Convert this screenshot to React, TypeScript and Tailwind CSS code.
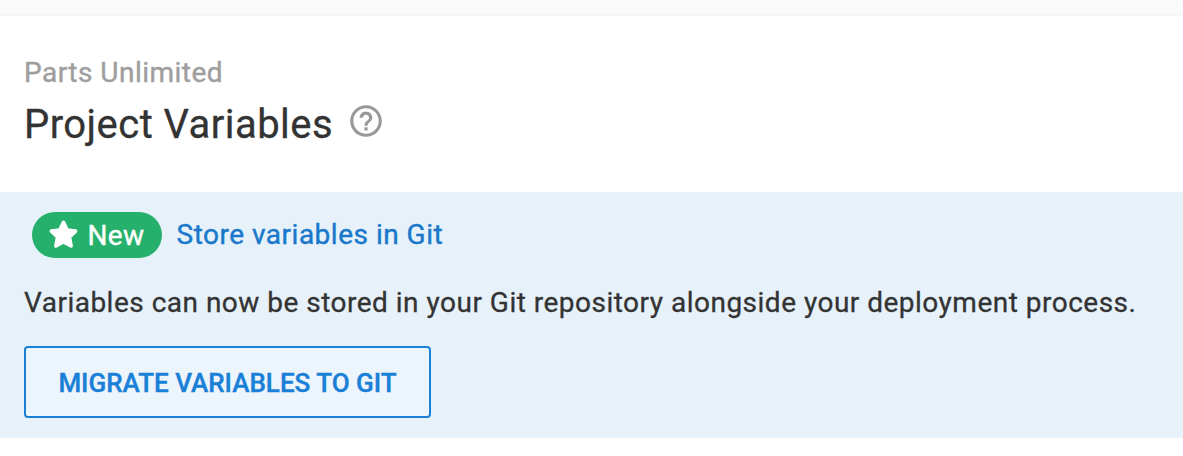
import { MdHelpOutline } from "react-icons/md";

function RoundedStar() {
  return (
    <svg className="-mt-0.5 size-[29px] shrink-0" viewBox="0 0 29 29" fill="currentColor" stroke="currentColor" strokeWidth="3.6" strokeLinejoin="round">
      <path d="M14.5 2.4 18.2 10 26.6 11.1 20.5 17 22.1 26 14.5 22 6.9 26 8.5 17 2.4 11.1 10.8 10Z" />
    </svg>
  );
}

export default function App() {
  return (
    <div className="h-[456px] w-full overflow-hidden bg-white font-['Roboto',sans-serif] text-[#333333]">
      <div className="h-4 border-b border-[#f5f5f5] bg-[#fafafa]" />
      <header className="flex h-44 flex-col px-6 pt-[41px]">
        <div className="h-8 text-[28px] leading-8 tracking-[0.48px] whitespace-nowrap text-[#9e9e9e] [-webkit-text-stroke:0.4px]">Parts Unlimited</div>
        <div className="mt-2 flex h-14 items-center">
          <h1 className="text-[40px] leading-[56px] tracking-[0.45px] whitespace-nowrap [-webkit-text-stroke:0.3px]">Project Variables</h1>
          <MdHelpOutline className="-mt-2 ml-[14px] size-[38px] text-[#999999]" />
        </div>
      </header>
      <section className="h-[246px] bg-[#e6f1fa] px-6 pt-5">
        <div className="flex h-[46px] items-center">
          <span className="ml-2 flex h-[46px] w-[130px] items-center rounded-full bg-[#25b06b] pl-[17px] text-[28px] text-white">
            <RoundedStar />
            <span className="mt-px ml-[9.5px] tracking-[0.3px] [-webkit-text-stroke:0.4px]">New</span>
          </span>
          <a className="ml-[14.5px] text-[28px] leading-8 tracking-[0.5px] whitespace-nowrap text-[#1978ca] [-webkit-text-stroke:0.4px]">Store variables in Git</a>
        </div>
        <p className="mt-7 text-[28px] leading-[34px] tracking-[0.49px] whitespace-nowrap [-webkit-text-stroke:0.3px]">Variables can now be stored in your Git repository alongside your deployment process.</p>
        <button className="mt-[26px] flex h-[72px] w-[407px] items-center justify-center rounded border-2 border-[#1a80d7] bg-[#edf5fc] pt-0.5 text-[26px] font-medium whitespace-nowrap text-[#1a80d7] [-webkit-text-stroke:0.4px]">MIGRATE VARIABLES TO GIT</button>
      </section>
    </div>
  );
}
